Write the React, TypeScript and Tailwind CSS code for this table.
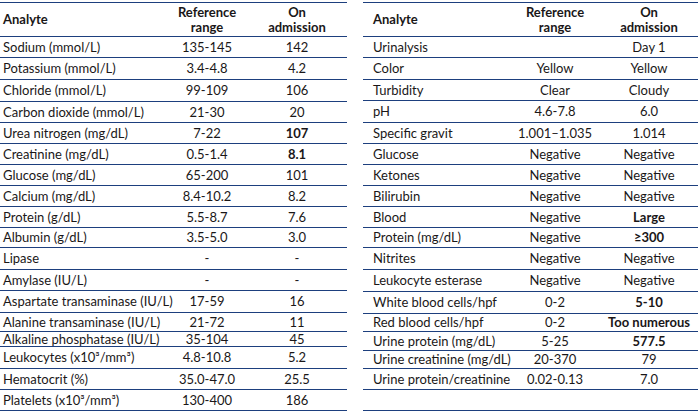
const LINE = "border-[#1d3f7e]";

type Row = { name: string; range: string; value: string; bold?: boolean; h: string };

const left: Row[] = [
  { name: "Sodium (mmol/L)", range: "135-145", value: "142", h: "h-[21px]" },
  { name: "Potassium (mmol/L)", range: "3.4-4.8", value: "4.2", h: "h-[22px]" },
  { name: "Chloride (mmol/L)", range: "99-109", value: "106", h: "h-[22px]" },
  { name: "Carbon dioxide (mmol/L)", range: "21-30", value: "20", h: "h-[21px]" },
  { name: "Urea nitrogen (mg/dL)", range: "7-22", value: "107", bold: true, h: "h-[21px]" },
  { name: "Creatinine (mg/dL)", range: "0.5-1.4", value: "8.1", bold: true, h: "h-[21px]" },
  { name: "Glucose (mg/dL)", range: "65-200", value: "101", h: "h-[21px]" },
  { name: "Calcium (mg/dL)", range: "8.4-10.2", value: "8.2", h: "h-[21px]" },
  { name: "Protein (g/dL)", range: "5.5-8.7", value: "7.6", h: "h-[21px]" },
  { name: "Albumin (g/dL)", range: "3.5-5.0", value: "3.0", h: "h-[20px]" },
  { name: "Lipase", range: "-", value: "-", h: "h-[22px]" },
  { name: "Amylase (IU/L)", range: "-", value: "-", h: "h-[21px]" },
  { name: "Aspartate transaminase (IU/L)", range: "17-59", value: "16", h: "h-[22px]" },
  { name: "Alanine transaminase (IU/L)", range: "21-72", value: "11", h: "h-[19px]" },
  { name: "Alkaline phosphatase (IU/L)", range: "35-104", value: "45", h: "h-[15px]" },
  { name: "Leukocytes (x10³/mm³)", range: "4.8-10.8", value: "5.2", h: "h-[22px]" },
  { name: "Hematocrit (%)", range: "35.0-47.0", value: "25.5", h: "h-[21px]" },
  { name: "Platelets (x10³/mm³)", range: "130-400", value: "186", h: "h-[21px]" },
];

const right: Row[] = [
  { name: "Urinalysis", range: "", value: "Day 1", h: "h-[21px]" },
  { name: "Color", range: "Yellow", value: "Yellow", h: "h-[22px]" },
  { name: "Turbidity", range: "Clear", value: "Cloudy", h: "h-[21px]" },
  { name: "pH", range: "4.6-7.8", value: "6.0", h: "h-[22px]" },
  { name: "Specific gravit", range: "1.001–1.035", value: "1.014", h: "h-[21px]" },
  { name: "Glucose", range: "Negative", value: "Negative", h: "h-[21px]" },
  { name: "Ketones", range: "Negative", value: "Negative", h: "h-[21px]" },
  { name: "Bilirubin", range: "Negative", value: "Negative", h: "h-[21px]" },
  { name: "Blood", range: "Negative", value: "Large", bold: true, h: "h-[21px]" },
  { name: "Protein (mg/dL)", range: "Negative", value: "≥300", bold: true, h: "h-[20px]" },
  { name: "Nitrites", range: "Negative", value: "Negative", h: "h-[22px]" },
  { name: "Leukocyte esterase", range: "Negative", value: "Negative", h: "h-[22px]" },
  { name: "White blood cells/hpf", range: "0-2", value: "5-10", bold: true, h: "h-[22px]" },
  { name: "Red blood cells/hpf", range: "0-2", value: "Too numerous", bold: true, h: "h-[18px]" },
  { name: "Urine protein (mg/dL)", range: "5-25", value: "577.5", bold: true, h: "h-[19px]" },
  { name: "Urine creatinine (mg/dL)", range: "20-370", value: "79", h: "h-[18px]" },
  { name: "Urine protein/creatinine", range: "0.02-0.13", value: "7.0", h: "h-[21px]" },
  { name: "", range: "", value: "", h: "h-[21px]" },
];

function Table({ rows, cols, pad }: { rows: Row[]; cols: string; pad: string }) {
  return (
    <div className={`border-t ${LINE}`}>
      <div className={`grid ${cols} h-[34px] items-center border-b ${LINE} font-bold leading-[15px]`}>
        <div className={pad}>Analyte</div>
        <div className="text-center">Reference<br />range</div>
        <div className="text-center">On<br />admission</div>
      </div>
      {rows.map((r, i) => (
        <div key={i} className={`grid ${cols} ${r.h} items-center border-b ${LINE} leading-none`}>
          <div className={`${pad} whitespace-nowrap`}>{r.name}</div>
          <div className="text-center whitespace-nowrap">{r.range}</div>
          <div className={`text-center whitespace-nowrap ${r.bold ? "font-bold" : ""}`}>{r.value}</div>
        </div>
      ))}
    </div>
  );
}

export default function App() {
  return (
    <div className="w-[700px] h-[414px] bg-white pt-[2px] text-[13px] text-[#1a1718] flex" style={{ fontFamily: "Lato, 'Liberation Sans', sans-serif" }}>
      <div className="w-[347px]">
        <Table rows={left} cols="grid-cols-[167px_80px_100px]" pad="pl-[3px]" />
      </div>
      <div className="w-[335px] ml-[16px]">
        <Table rows={right} cols="grid-cols-[147px_90px_98px]" pad="pl-[10px]" />
      </div>
    </div>
  );
}
